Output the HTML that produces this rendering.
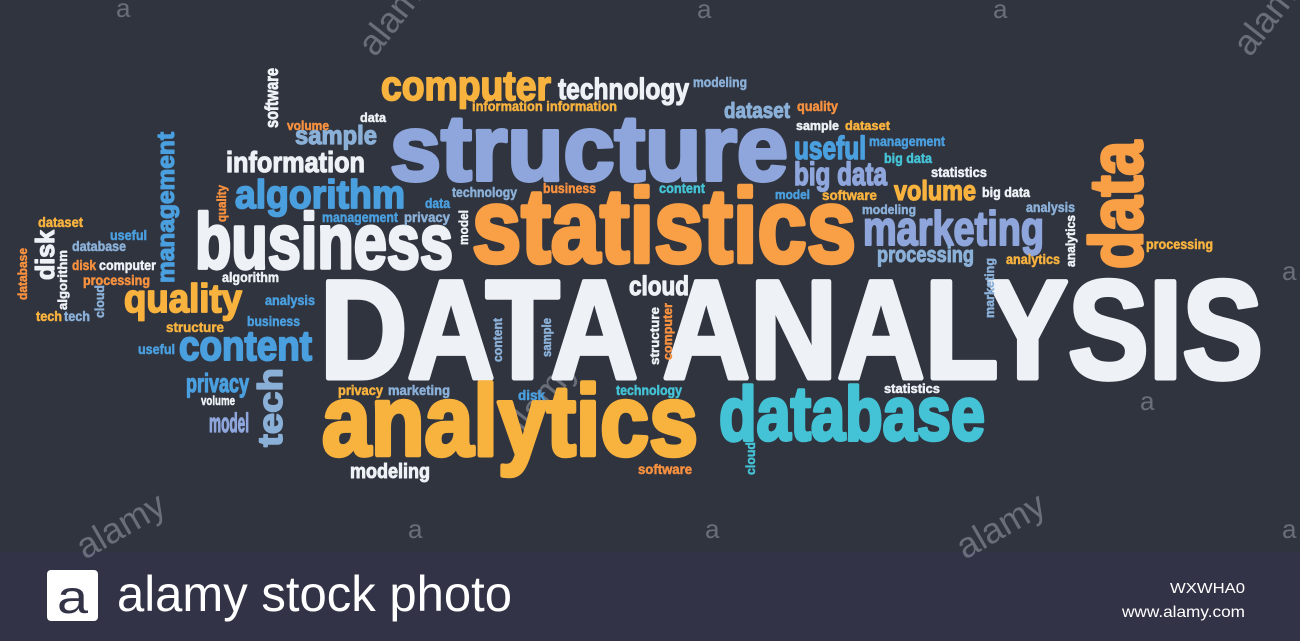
<!DOCTYPE html>
<html><head><meta charset="utf-8"><style>
html,body{margin:0;padding:0;background:#30343f;}
svg{display:block}
text{font-family:"Liberation Sans",sans-serif;font-weight:bold;stroke-width:0.5;stroke-linejoin:round}
.W{fill:#eef2f6;stroke:#eef2f6}.O{fill:#f99f45;stroke:#f99f45}.Y{fill:#f8b23e;stroke:#f8b23e}.P{fill:#8ea6dc;stroke:#8ea6dc}.B{fill:#4a9fdf;stroke:#4a9fdf}.C{fill:#45c3d6;stroke:#45c3d6}.S{fill:#8bb0d8;stroke:#8bb0d8}.R{fill:#f7913f;stroke:#f7913f}
.wm{fill:#9a9ea8;font-weight:normal;opacity:.55;stroke:none}
.ft{stroke:none;font-weight:normal}
</style></head><body>
<svg width="1300" height="641" viewBox="0 0 1300 641" xmlns="http://www.w3.org/2000/svg">
<rect width="1300" height="552" fill="#30343f"/>
<rect y="552" width="1300" height="89" fill="#333347"/>
<g>
<text class="wm" x="116" y="17" font-size="26">a</text>
<text class="wm" x="697" y="18" font-size="26">a</text>
<text class="wm" x="993" y="18" font-size="26">a</text>
<text class="wm" x="1140" y="410" font-size="26">a</text>
<text class="wm" x="1282" y="280" font-size="26">a</text>
<text class="wm" x="408" y="538" font-size="26">a</text>
<text class="wm" x="705" y="538" font-size="26">a</text>
<text class="wm" x="1282" y="538" font-size="26">a</text>
<text class="wm" font-size="36" transform="translate(375,58) rotate(-52)">alamy</text>
<text class="wm" font-size="36" transform="translate(1250,58) rotate(-52)">alamy</text>
<text class="wm" font-size="36" transform="translate(85,560) rotate(-30)">alamy</text>
<text class="wm" font-size="36" transform="translate(965,560) rotate(-30)">alamy</text>
<text class="wm" font-size="36" transform="translate(520,445) rotate(-52)">alamy</text>

<text class="W" x="320" y="378" font-size="140" style="stroke-width:5" textLength="943" lengthAdjust="spacingAndGlyphs">DATA ANALYSIS</text>
<text class="O" x="472" y="262" font-size="105" style="stroke-width:4.5" textLength="384" lengthAdjust="spacingAndGlyphs">statistics</text>
<text class="P" x="390" y="180" font-size="93" style="stroke-width:4" textLength="398" lengthAdjust="spacingAndGlyphs">structure</text>
<text class="Y" x="322" y="455" font-size="100" style="stroke-width:4.5" textLength="376" lengthAdjust="spacingAndGlyphs">analytics</text>
<text class="W" x="195" y="268" font-size="78" style="stroke-width:3.5" textLength="258" lengthAdjust="spacingAndGlyphs">business</text>
<text class="C" x="719" y="440" font-size="76" style="stroke-width:3.5" textLength="266" lengthAdjust="spacingAndGlyphs">database</text>
<text class="P" x="863" y="245" font-size="48" style="stroke-width:2" textLength="181" lengthAdjust="spacingAndGlyphs">marketing</text>
<text class="O" font-size="74" style="stroke-width:3.5" textLength="128" lengthAdjust="spacingAndGlyphs" transform="translate(1142,269) rotate(-90)">data</text>
<text class="Y" x="381" y="100" font-size="42" style="stroke-width:1.8" textLength="170" lengthAdjust="spacingAndGlyphs">computer</text>
<text class="W" x="558" y="99" font-size="30" style="stroke-width:1.2" textLength="131" lengthAdjust="spacingAndGlyphs">technology</text>
<text class="S" x="693" y="87" font-size="14" textLength="54" lengthAdjust="spacingAndGlyphs">modeling</text>
<text class="Y" x="472" y="111" font-size="14" textLength="145" lengthAdjust="spacingAndGlyphs">information information</text>
<text class="S" x="724" y="118" font-size="22" style="stroke-width:1" textLength="66" lengthAdjust="spacingAndGlyphs">dataset</text>
<text class="R" x="797" y="111" font-size="14" textLength="41" lengthAdjust="spacingAndGlyphs">quality</text>
<text class="W" x="796" y="130" font-size="13" textLength="43" lengthAdjust="spacingAndGlyphs">sample</text>
<text class="Y" x="845" y="130" font-size="13" textLength="45" lengthAdjust="spacingAndGlyphs">dataset</text>
<text class="B" x="794" y="159" font-size="32" style="stroke-width:1.5" textLength="72" lengthAdjust="spacingAndGlyphs">useful</text>
<text class="B" x="869" y="146" font-size="14" textLength="76" lengthAdjust="spacingAndGlyphs">management</text>
<text class="P" x="794" y="185" font-size="32" style="stroke-width:1.5" textLength="93" lengthAdjust="spacingAndGlyphs">big data</text>
<text class="C" x="884" y="163" font-size="14" textLength="48" lengthAdjust="spacingAndGlyphs">big data</text>
<text class="W" x="931" y="177" font-size="14" textLength="56" lengthAdjust="spacingAndGlyphs">statistics</text>
<text class="Y" x="894" y="200" font-size="28" style="stroke-width:1.3" textLength="82" lengthAdjust="spacingAndGlyphs">volume</text>
<text class="W" x="982" y="197" font-size="14" textLength="48" lengthAdjust="spacingAndGlyphs">big data</text>
<text class="B" x="775" y="199" font-size="13" textLength="35" lengthAdjust="spacingAndGlyphs">model</text>
<text class="Y" x="822" y="200" font-size="14" textLength="55" lengthAdjust="spacingAndGlyphs">software</text>
<text class="S" x="862" y="214" font-size="13" textLength="54" lengthAdjust="spacingAndGlyphs">modeling</text>
<text class="S" x="1026" y="212" font-size="14" textLength="49" lengthAdjust="spacingAndGlyphs">analysis</text>
<text class="S" x="877" y="262" font-size="22" style="stroke-width:1" textLength="97" lengthAdjust="spacingAndGlyphs">processing</text>
<text class="Y" x="1006" y="264" font-size="14" textLength="54" lengthAdjust="spacingAndGlyphs">analytics</text>
<text class="W" font-size="13" textLength="52" lengthAdjust="spacingAndGlyphs" transform="translate(1075,267) rotate(-90)">analytics</text>
<text class="S" font-size="13" textLength="60" lengthAdjust="spacingAndGlyphs" transform="translate(994,318) rotate(-90)">marketing</text>
<text class="Y" x="1146" y="249" font-size="14" textLength="67" lengthAdjust="spacingAndGlyphs">processing</text>
<text class="S" x="452" y="197" font-size="14" textLength="65" lengthAdjust="spacingAndGlyphs">technology</text>
<text class="R" x="543" y="193" font-size="14" textLength="53" lengthAdjust="spacingAndGlyphs">business</text>
<text class="C" x="659" y="193" font-size="14" textLength="46" lengthAdjust="spacingAndGlyphs">content</text>
<text class="B" x="425" y="208" font-size="14" textLength="25" lengthAdjust="spacingAndGlyphs">data</text>
<text class="S" x="404" y="222" font-size="14" textLength="46" lengthAdjust="spacingAndGlyphs">privacy</text>
<text class="W" font-size="13" textLength="35" lengthAdjust="spacingAndGlyphs" transform="translate(468,245) rotate(-90)">model</text>
<text class="W" x="629" y="295" font-size="27" style="stroke-width:1.2" textLength="60" lengthAdjust="spacingAndGlyphs">cloud</text>
<text class="B" x="235" y="208" font-size="40" style="stroke-width:1.8" textLength="170" lengthAdjust="spacingAndGlyphs">algorithm</text>
<text class="W" x="226" y="172" font-size="29" style="stroke-width:1.2" textLength="139" lengthAdjust="spacingAndGlyphs">information</text>
<text class="S" x="295" y="144" font-size="26" style="stroke-width:1.2" textLength="82" lengthAdjust="spacingAndGlyphs">sample</text>
<text class="R" x="287" y="130" font-size="13" textLength="42" lengthAdjust="spacingAndGlyphs">volume</text>
<text class="W" x="360" y="122" font-size="13" textLength="26" lengthAdjust="spacingAndGlyphs">data</text>
<text class="W" font-size="18" style="stroke-width:0.8" textLength="60" lengthAdjust="spacingAndGlyphs" transform="translate(278,128) rotate(-90)">software</text>
<text class="B" font-size="24" style="stroke-width:1.2" textLength="151" lengthAdjust="spacingAndGlyphs" transform="translate(174,283) rotate(-90)">management</text>
<text class="R" font-size="13" textLength="37" lengthAdjust="spacingAndGlyphs" transform="translate(226,222) rotate(-90)">quality</text>
<text class="B" x="322" y="222" font-size="14" textLength="76" lengthAdjust="spacingAndGlyphs">management</text>
<text class="Y" x="38" y="227" font-size="14" textLength="45" lengthAdjust="spacingAndGlyphs">dataset</text>
<text class="B" x="110" y="240" font-size="14" textLength="37" lengthAdjust="spacingAndGlyphs">useful</text>
<text class="S" x="72" y="251" font-size="14" textLength="54" lengthAdjust="spacingAndGlyphs">database</text>
<text class="W" font-size="26" style="stroke-width:1.2" textLength="50" lengthAdjust="spacingAndGlyphs" transform="translate(54,280) rotate(-90)">disk</text>
<text class="R" font-size="13" textLength="52" lengthAdjust="spacingAndGlyphs" transform="translate(27,300) rotate(-90)">database</text>
<text class="W" font-size="13" textLength="60" lengthAdjust="spacingAndGlyphs" transform="translate(67,310) rotate(-90)">algorithm</text>
<text class="R" x="72" y="270" font-size="14" textLength="24" lengthAdjust="spacingAndGlyphs">disk</text>
<text class="W" x="99" y="270" font-size="14" textLength="57" lengthAdjust="spacingAndGlyphs">computer</text>
<text class="R" x="83" y="285" font-size="14" textLength="67" lengthAdjust="spacingAndGlyphs">processing</text>
<text class="S" font-size="13" textLength="33" lengthAdjust="spacingAndGlyphs" transform="translate(104,318) rotate(-90)">cloud</text>
<text class="Y" x="36" y="321" font-size="14" textLength="26" lengthAdjust="spacingAndGlyphs">tech</text>
<text class="S" x="64" y="321" font-size="14" textLength="26" lengthAdjust="spacingAndGlyphs">tech</text>
<text class="W" x="222" y="282" font-size="14" textLength="57" lengthAdjust="spacingAndGlyphs">algorithm</text>
<text class="Y" x="124" y="312" font-size="40" style="stroke-width:1.8" textLength="118" lengthAdjust="spacingAndGlyphs">quality</text>
<text class="B" x="265" y="305" font-size="14" textLength="50" lengthAdjust="spacingAndGlyphs">analysis</text>
<text class="Y" x="166" y="332" font-size="14" textLength="58" lengthAdjust="spacingAndGlyphs">structure</text>
<text class="B" x="247" y="326" font-size="14" textLength="53" lengthAdjust="spacingAndGlyphs">business</text>
<text class="B" x="138" y="354" font-size="14" textLength="37" lengthAdjust="spacingAndGlyphs">useful</text>
<text class="B" x="179" y="360" font-size="42" style="stroke-width:2" textLength="133" lengthAdjust="spacingAndGlyphs">content</text>
<text class="B" x="186" y="392" font-size="26" style="stroke-width:1.2" textLength="63" lengthAdjust="spacingAndGlyphs">privacy</text>
<text class="W" x="201" y="405" font-size="13" textLength="34" lengthAdjust="spacingAndGlyphs">volume</text>
<text class="P" x="209" y="432" font-size="27" style="stroke-width:1.2" textLength="40" lengthAdjust="spacingAndGlyphs">model</text>
<text class="S" font-size="34" style="stroke-width:1.5" textLength="79" lengthAdjust="spacingAndGlyphs" transform="translate(282,447) rotate(-90)">tech</text>
<text class="S" font-size="13" textLength="44" lengthAdjust="spacingAndGlyphs" transform="translate(502,362) rotate(-90)">content</text>
<text class="S" font-size="13" textLength="39" lengthAdjust="spacingAndGlyphs" transform="translate(551,357) rotate(-90)">sample</text>
<text class="W" font-size="13" textLength="58" lengthAdjust="spacingAndGlyphs" transform="translate(659,365) rotate(-90)">structure</text>
<text class="R" font-size="13" textLength="57" lengthAdjust="spacingAndGlyphs" transform="translate(672,360) rotate(-90)">computer</text>
<text class="Y" x="338" y="395" font-size="14" textLength="45" lengthAdjust="spacingAndGlyphs">privacy</text>
<text class="S" x="388" y="395" font-size="14" textLength="62" lengthAdjust="spacingAndGlyphs">marketing</text>
<text class="B" x="518" y="400" font-size="14" textLength="27" lengthAdjust="spacingAndGlyphs">disk</text>
<text class="C" x="616" y="395" font-size="14" textLength="66" lengthAdjust="spacingAndGlyphs">technology</text>
<text class="W" x="884" y="393" font-size="13" textLength="56" lengthAdjust="spacingAndGlyphs">statistics</text>
<text class="W" x="350" y="478" font-size="20" style="stroke-width:0.9" textLength="80" lengthAdjust="spacingAndGlyphs">modeling</text>
<text class="R" x="638" y="474" font-size="14" textLength="54" lengthAdjust="spacingAndGlyphs">software</text>
<text class="C" font-size="13" textLength="33" lengthAdjust="spacingAndGlyphs" transform="translate(755,475) rotate(-90)">cloud</text>

<rect x="47" y="570" width="51" height="51" rx="4" fill="#ffffff"/>
<text class="ft" x="57" y="613" font-size="46" fill="#333347" textLength="31" lengthAdjust="spacingAndGlyphs">a</text>
<text class="ft" x="117" y="611" font-size="50" fill="#ffffff" textLength="395" lengthAdjust="spacingAndGlyphs">alamy stock photo</text>
<text class="ft" x="1170" y="593" font-size="15" fill="#ffffff" textLength="75" lengthAdjust="spacingAndGlyphs">WXWHA0</text>
<text class="ft" x="1122" y="617" font-size="16" fill="#ffffff" textLength="123" lengthAdjust="spacingAndGlyphs">www.alamy.com</text>
</g>
</svg>
</body></html>
